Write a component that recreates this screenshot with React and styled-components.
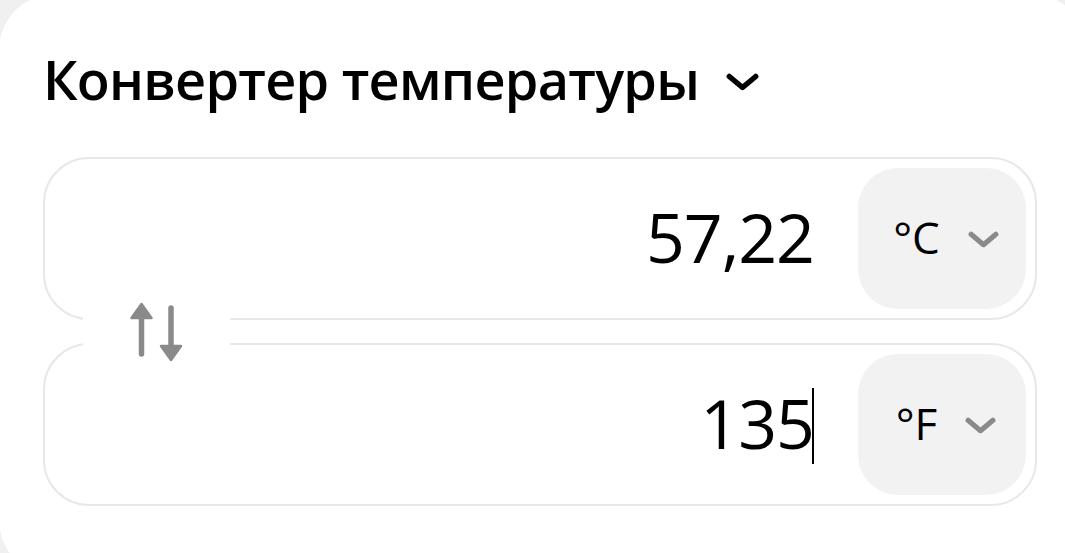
import React from 'react';
import styled, { createGlobalStyle } from 'styled-components';

const GlobalStyle = createGlobalStyle`
  html, body {
    margin: 0;
    padding: 0;
    background: #f0f0f0;
    overflow: hidden;
  }
`;

const Card = styled.div`
  box-sizing: border-box;
  width: 1088px;
  height: 582px;
  margin: -6px 0 0 -1px;
  padding: 53px 0 0 44px;
  background: #fff;
  border-radius: 56px;
  font-family: "Open Sans", "Noto Sans", sans-serif;
  color: #000;
`;

const Title = styled.h1`
  display: flex;
  align-items: center;
  gap: 27px;
  height: 64px;
  margin: 0 0 46px;
  font-size: 54px;
  line-height: 64px;
  font-weight: 600;
  letter-spacing: -0.75px;

  svg {
    margin-top: 6px;
  }
`;

const Fields = styled.div`
  position: relative;
  display: flex;
  flex-direction: column;
  gap: 23px;
  width: 994px;
`;

const Field = styled.div`
  box-sizing: border-box;
  display: flex;
  align-items: stretch;
  height: 163px;
  padding: 9px;
  border: 2px solid #e8e8e8;
  border-radius: 46px;
`;

const Value = styled.div`
  flex: 1;
  display: flex;
  align-items: center;
  justify-content: flex-end;
  padding: 0 ${p => p.$gap}px 4px 0;
  font-size: 68px;
  letter-spacing: -1px;
`;

const Caret = styled.span`
  display: inline-block;
  width: 2px;
  height: 76px;
  margin: 6px 0 0 -2px;
  background: #000;
`;

const UnitButton = styled.button`
  display: flex;
  align-items: center;
  justify-content: center;
  gap: 28px;
  width: 168px;
  padding: 0 0 4px 8px;
  border: none;
  border-radius: 40px;
  background: #f2f2f2;
  font-family: "Open Sans", "Noto Sans", sans-serif;
  font-size: 44px;
  color: #000;

  svg {
    margin-top: 6px;
  }
`;

const SwapButton = styled.div`
  position: absolute;
  left: 40px;
  top: 159px;
  width: 147px;
  height: 32px;
  display: flex;
  align-items: center;
  justify-content: center;
  background: #fff;
`;

const Chevron = ({ w, h, stroke, width }) => (
  <svg width={w} height={h} viewBox="0 0 30 16" fill="none">
    <polyline points="3,3 15,13 27,3" stroke={stroke} strokeWidth={width}
      strokeLinecap="round" strokeLinejoin="round" />
  </svg>
);

const SwapIcon = () => (
  <svg width="60" height="66" viewBox="0 0 60 66" fill="none" style={{ flexShrink: 0 }}>
    <line x1="14.5" y1="18" x2="14.5" y2="55" stroke="#8a8a8a" strokeWidth="5.5" strokeLinecap="round" />
    <polygon points="4.5,19 24.5,19 14.5,5" fill="#8a8a8a" stroke="#8a8a8a" strokeWidth="2.5" strokeLinejoin="round" />
    <line x1="44" y1="9" x2="44" y2="47" stroke="#8a8a8a" strokeWidth="5.5" strokeLinecap="round" />
    <polygon points="34,47 54,47 44,61" fill="#8a8a8a" stroke="#8a8a8a" strokeWidth="2.5" strokeLinejoin="round" />
  </svg>
);

const UnitRow = ({ unit }) => (
  <UnitButton>
    <span>{unit}</span>
    <Chevron w={31} h={17} stroke="#8a8a8a" width={5} />
  </UnitButton>
);

export default function App() {
  return (
    <>
      <GlobalStyle />
      <Card>
        <Title>
          Конвертер температуры
          <Chevron w={33} h={18} stroke="#000" width={5} />
        </Title>
        <Fields>
          <Field>
            <Value $gap={44}>57,22</Value>
            <UnitRow unit="°C" />
          </Field>
          <Field>
            <Value $gap={44}>135<Caret /></Value>
            <UnitRow unit="°F" />
          </Field>
          <SwapButton>
            <SwapIcon />
          </SwapButton>
        </Fields>
      </Card>
    </>
  );
}
